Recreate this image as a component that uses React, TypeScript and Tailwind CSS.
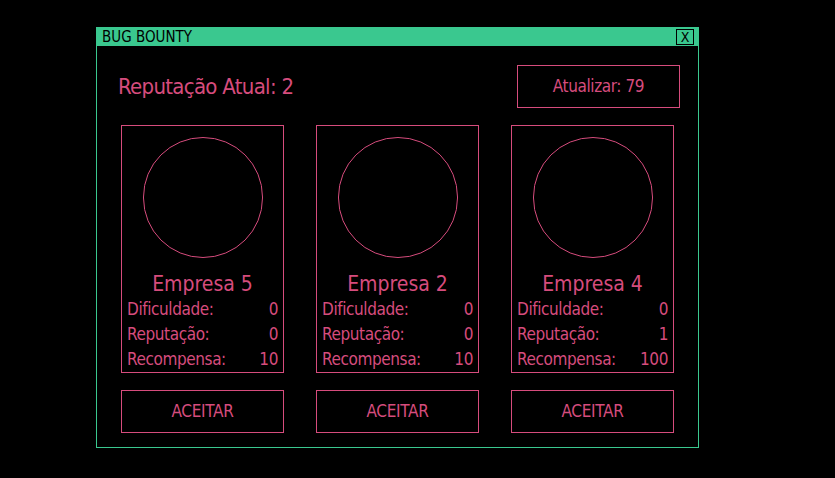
import React from 'react';

const empresas = [
  { nome: 'Empresa 5', dificuldade: 0, reputacao: 0, recompensa: 10 },
  { nome: 'Empresa 2', dificuldade: 0, reputacao: 0, recompensa: 10 },
  { nome: 'Empresa 4', dificuldade: 0, reputacao: 1, recompensa: 100 },
];

const font = "font-['DejaVu_Sans_Condensed','Liberation_Sans',sans-serif]";

const App = () => {
  return (
    <div className={`h-[478px] w-[835px] overflow-hidden bg-black pt-[27px] pl-[96px] ${font}`}>
      {/* janela */}
      <div className="flex h-[421px] w-[603px] flex-col border border-[#3ac88f]">
        {/* barra de título */}
        <div className="flex h-[18px] items-center justify-between bg-[#3ac88f] pl-[5px] pr-[4px]">
          <span className="text-[15px] leading-none text-black">BUG BOUNTY</span>
          <button className="flex h-[16px] w-[18px] items-center justify-center border border-black text-[14px] leading-none text-black">
            X
          </button>
        </div>

        {/* cabeçalho */}
        <div className="flex items-center justify-between pt-[19px] pl-[21px] pr-[18px]">
          <span className="text-[22px] leading-none tracking-[-0.7px] text-[#d64c7d]">Reputação Atual: 2</span>
          <button className="flex h-[43px] w-[163px] items-center justify-center border border-[#d64c7d] text-[17px] tracking-[-0.4px] text-[#d64c7d]">
            Atualizar: 79
          </button>
        </div>

        {/* cartões */}
        <div className="mt-[17px] flex gap-[32px] px-[24px]">
          {empresas.map((e) => (
            <div
              key={e.nome}
              className="flex h-[248px] w-[163px] flex-col items-center border border-[#d64c7d] pt-[11px] text-[#d64c7d]"
            >
              <div className="h-[121px] w-[120px] rounded-full border border-[#d64c7d]" />
              <div className="mt-[14px] text-[21px] leading-[24px]">{e.nome}</div>
              <div className="mt-[1px] flex w-full flex-col px-[5px] text-[17px] leading-[25px] tracking-[-0.4px]">
                <div className="flex justify-between">
                  <span>Dificuldade:</span>
                  <span>{e.dificuldade}</span>
                </div>
                <div className="flex justify-between">
                  <span>Reputação:</span>
                  <span>{e.reputacao}</span>
                </div>
                <div className="flex justify-between">
                  <span>Recompensa:</span>
                  <span>{e.recompensa}</span>
                </div>
              </div>
            </div>
          ))}
        </div>

        {/* botões */}
        <div className="mt-[17px] flex gap-[32px] px-[24px]">
          {empresas.map((e) => (
            <button
              key={e.nome}
              className="flex h-[43px] w-[163px] items-center justify-center border border-[#d64c7d] text-[17px] tracking-[-0.3px] text-[#d64c7d]"
            >
              ACEITAR
            </button>
          ))}
        </div>
      </div>
    </div>
  );
};

export default App;
